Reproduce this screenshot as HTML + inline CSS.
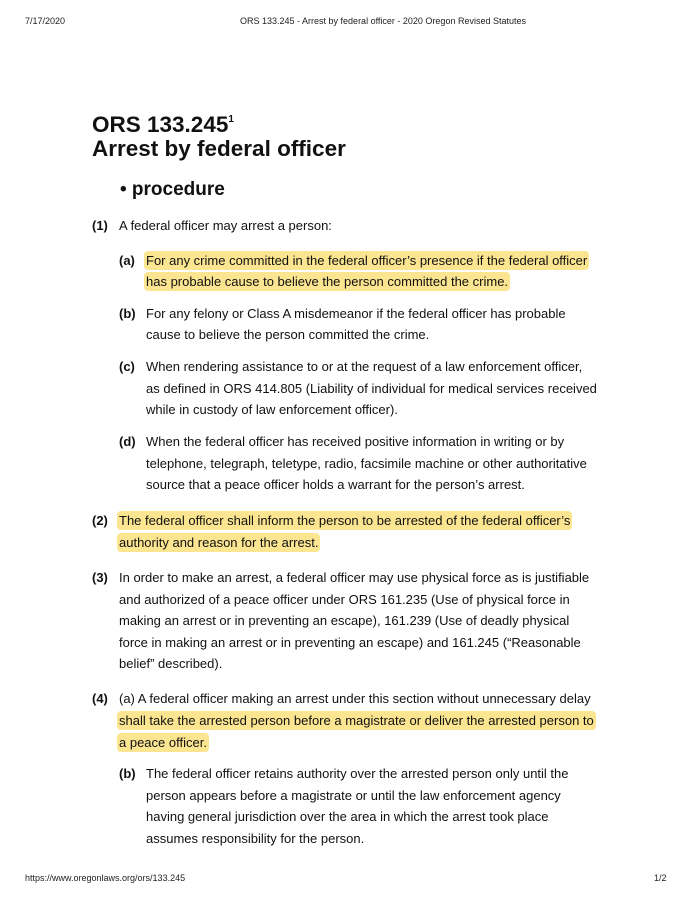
<!DOCTYPE html>
<html><head><meta charset="utf-8"><style>
body{margin:0;width:696px;height:900px;background:#fff;position:relative;font-family:"Liberation Sans",Arial,sans-serif;color:#111;overflow:hidden}
.a{position:absolute;white-space:nowrap}
.s{font-size:9px;line-height:12px;color:#222}
.t{font-size:13px;line-height:16px}
.b{font-weight:bold}
.h{background:#fbe590;border-radius:4px;padding:2px 2px;margin-left:-2px}
.ti{font-size:22.5px;font-weight:bold;line-height:26px}
</style></head><body>
<div class="a s" style="left:25px;top:15px">7/17/2020</div>
<div class="a s" style="left:240px;top:15px">ORS 133.245 - Arrest by federal officer - 2020 Oregon Revised Statutes</div>
<div class="a ti" style="left:92px;top:107px">ORS 133.245<sup style="font-size:10px;vertical-align:10px">1</sup></div>
<div class="a ti" style="left:92px;top:136px">Arrest by federal officer</div>
<div class="a b" style="left:120px;top:178px;font-size:19px;line-height:24px">• procedure</div>

<div class="a t b" style="left:92px;top:218px">(1)</div>
<div class="a t" style="left:119px;top:218px">A federal officer may arrest a person:</div>

<div class="a t b" style="left:119px;top:253px">(a)</div>
<div class="a t" style="left:146px;top:253px"><span class="h">For any crime committed in the federal officer’s presence if the federal officer</span></div>
<div class="a t" style="left:146px;top:274px"><span class="h">has probable cause to believe the person committed the crime.</span></div>

<div class="a t b" style="left:119px;top:306px">(b)</div>
<div class="a t" style="left:146px;top:306px">For any felony or Class A misdemeanor if the federal officer has probable</div>
<div class="a t" style="left:146px;top:327px">cause to believe the person committed the crime.</div>

<div class="a t b" style="left:119px;top:359px">(c)</div>
<div class="a t" style="left:146px;top:359px">When rendering assistance to or at the request of a law enforcement officer,</div>
<div class="a t" style="left:146px;top:381px">as defined in ORS 414.805 (Liability of individual for medical services received</div>
<div class="a t" style="left:146px;top:402px">while in custody of law enforcement officer).</div>

<div class="a t b" style="left:119px;top:434px">(d)</div>
<div class="a t" style="left:146px;top:434px">When the federal officer has received positive information in writing or by</div>
<div class="a t" style="left:146px;top:456px">telephone, telegraph, teletype, radio, facsimile machine or other authoritative</div>
<div class="a t" style="left:146px;top:477px">source that a peace officer holds a warrant for the person’s arrest.</div>

<div class="a t b" style="left:92px;top:513px">(2)</div>
<div class="a t" style="left:119px;top:513px"><span class="h">The federal officer shall inform the person to be arrested of the federal officer’s</span></div>
<div class="a t" style="left:119px;top:535px"><span class="h">authority and reason for the arrest.</span></div>

<div class="a t b" style="left:92px;top:570px">(3)</div>
<div class="a t" style="left:119px;top:570px">In order to make an arrest, a federal officer may use physical force as is justifiable</div>
<div class="a t" style="left:119px;top:592px">and authorized of a peace officer under ORS 161.235 (Use of physical force in</div>
<div class="a t" style="left:119px;top:613px">making an arrest or in preventing an escape), 161.239 (Use of deadly physical</div>
<div class="a t" style="left:119px;top:635px">force in making an arrest or in preventing an escape) and 161.245 (“Reasonable</div>
<div class="a t" style="left:119px;top:656px">belief” described).</div>

<div class="a t b" style="left:92px;top:691px">(4)</div>
<div class="a t" style="left:119px;top:691px">(a) A federal officer making an arrest under this section without unnecessary delay</div>
<div class="a t" style="left:119px;top:713px"><span class="h">shall take the arrested person before a magistrate or deliver the arrested person to</span></div>
<div class="a t" style="left:119px;top:735px"><span class="h">a peace officer.</span></div>

<div class="a t b" style="left:119px;top:766px">(b)</div>
<div class="a t" style="left:146px;top:766px">The federal officer retains authority over the arrested person only until the</div>
<div class="a t" style="left:146px;top:788px">person appears before a magistrate or until the law enforcement agency</div>
<div class="a t" style="left:146px;top:809px">having general jurisdiction over the area in which the arrest took place</div>
<div class="a t" style="left:146px;top:831px">assumes responsibility for the person.</div>

<div class="a s" style="left:25px;top:872px">https://www.oregonlaws.org/ors/133.245</div>
<div class="a s" style="left:654px;top:872px">1/2</div>
</body></html>
